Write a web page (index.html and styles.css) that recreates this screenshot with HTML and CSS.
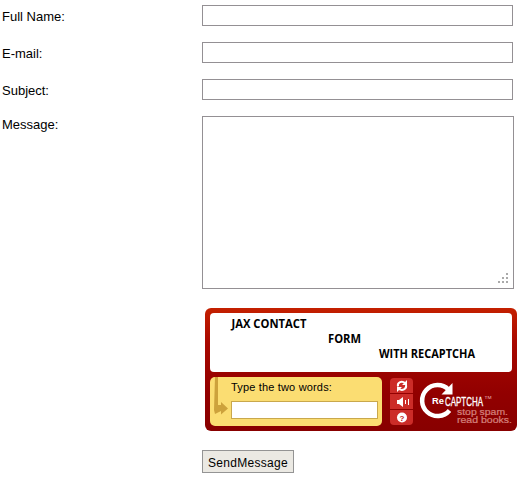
FILE: index.html
```html
<!DOCTYPE html>
<html lang="en">
<head>
<meta charset="utf-8">
<title>Contact form</title>
<link rel="stylesheet" href="styles.css">
</head>
<body>
<form class="contact">
  <label for="name">Full Name:</label><input id="name" class="field" type="text">
  <label for="email">E-mail:</label><input id="email" class="field" type="text">
  <label for="subject">Subject:</label><input id="subject" class="field" type="text">
  <label for="message" class="message-label">Message:</label>
  <div class="message-wrap">
    <textarea id="message" class="message"></textarea>
    <svg class="grip" width="10" height="10" fill="#aaa"><path d="M8 0h2v2h-2zM4 4h2v2h-2zM8 4h2v2h-2zM0 8h2v2h-2zM4 8h2v2h-2zM8 8h2v2h-2z"/></svg>
  </div>
  <div class="captcha">
    <svg class="challenge" width="302" height="59" viewBox="0 0 302 59">
      <text x="21.5" y="15" textLength="75" lengthAdjust="spacingAndGlyphs">JAX CONTACT</text>
      <text x="118" y="30" textLength="33" lengthAdjust="spacingAndGlyphs">FORM</text>
      <text x="169" y="45" textLength="96" lengthAdjust="spacingAndGlyphs">WITH RECAPTCHA</text>
    </svg>
    <div class="controls">
      <div class="answer">
        <svg class="arrow" width="18" height="40" viewBox="0 0 18 40"><path d="M4 0h3v28h3v-3l7 6.500-7 6V34l-6 3-1-4z" fill="#cda23c"/></svg>
        <label class="answer-label" for="words">Type the two words:</label>
        <input id="words" class="words" type="text">
      </div>
      <div class="tools">
        <button type="button" class="tool" aria-label="Reload"><svg width="23" height="16" viewBox="0 0 23 16"><path d="M8 8.500C7 4 12 2.500 15 5M16 7c1 4.500-4 6-7 4" fill="none" stroke="#fff" stroke-width="2"/><path d="M12 7h5V2zM12 9H7v5z" fill="#fff"/></svg></button>
        <button type="button" class="tool" aria-label="Audio"><svg width="23" height="16" viewBox="0 0 23 16"><path d="M7 6h2l4-3v10l-4-3H7z" fill="#fff"/><path d="M15.500 6v4M18.500 5v6" stroke="#fff"/></svg></button>
        <button type="button" class="tool" aria-label="Help"><svg width="23" height="16" viewBox="0 0 23 16"><circle cx="12" cy="7.500" r="5" fill="#fff"/><text x="12" y="10.500" class="question">?</text></svg></button>
      </div>
      <svg class="logo" width="99" height="49" viewBox="0 0 99 49">
        <path d="M31.500 12.500A15.500 15.500 0 1 0 32.500 33.500" fill="none" stroke="#fff" stroke-width="4.500"/>
        <path d="M35.500 6v11.500h-11z" fill="#fff"/>
        <text class="re" x="15" y="27" textLength="12" lengthAdjust="spacingAndGlyphs">Re</text>
        <text class="name" x="28" y="29" textLength="38" lengthAdjust="spacingAndGlyphs">CAPTCHA</text>
        <text class="tm" x="67.500" y="22" textLength="7" lengthAdjust="spacingAndGlyphs">TM</text>
        <text class="tag" x="40" y="38" textLength="51" lengthAdjust="spacingAndGlyphs">stop spam.</text>
        <text class="tag" x="40" y="46" textLength="55" lengthAdjust="spacingAndGlyphs">read books.</text>
      </svg>
    </div>
  </div>
  <button type="button" class="send">SendMessage</button>
</form>
</body>
</html>
```
FILE: styles.css
```css
* { box-sizing: border-box; }
body {
  margin: 0;
  background: #fff;
  color: #000;
  font: 13px/16px "Liberation Sans", Arial, sans-serif;
}
.contact {
  display: grid;
  grid-template-columns: 200px 315px;
  grid-template-rows: 21px 21px 21px 173px 126px 26px;
  row-gap: 16px;
  padding: 5px 0 5px 2px;
}
.contact > label { padding-top: 4px; }
.contact > .message-label { padding-top: 1px; }
input, textarea, button {
  margin: 0;
  border-radius: 0;
  font: inherit;
  outline: 0;
}
.field, .message {
  width: 311px;
  height: 21px;
  border: 1px solid #949094;
  background: #fff;
}
.message-wrap { position: relative; width: 312px; height: 173px; }
.message { display: block; width: 312px; height: 173px; resize: none; }
.grip { position: absolute; right: 6px; bottom: 6px; }
.captcha {
  grid-column: 2;
  width: 312px;
  height: 123px;
  margin: 3px 0 0 3px;
  padding: 5px;
  border-radius: 6px;
  background: linear-gradient(#c42000 0, #a80800 35px, #920000 85px, #880000);
}
.challenge {
  display: block;
  border-radius: 4px;
  background: #fff;
  font: bold 12px "Open Sans", sans-serif;
}
.controls { display: flex; margin-top: 5px; height: 49px; }
.answer {
  position: relative;
  flex: none;
  width: 172px;
  padding: 2px 0 0 21px;
  border-radius: 5px;
  background: #fbdd72;
}
.arrow { position: absolute; left: 1px; top: 0; }
.answer-label { display: block; font-size: 11px; line-height: 16px; letter-spacing: .17px; }
.words {
  display: block;
  width: 147px;
  height: 18px;
  margin-top: 6px;
  border: 1px solid #c9a84c;
  background: #fff;
}
.tools {
  display: flex;
  flex: none;
  flex-direction: column;
  gap: 1px;
  width: 23px;
  height: 47px;
  margin: 1px 0 0 8px;
  border-radius: 4px;
  overflow: hidden;
}
.tool { flex: 1; display: flex; min-height: 0; padding: 0; border: 0; background: #cc2c28; }
.question { font: bold 8px "Liberation Sans", sans-serif; fill: #c02020; text-anchor: middle; }
.logo { flex: none; margin-left: 4px; }
.re { font: bold 9px "Liberation Sans", sans-serif; fill: #fff; }
.name { font: 12px "Liberation Sans", sans-serif; fill: #fff; stroke: #fff; stroke-width: .3px; }
.tm { font: 4px "Liberation Sans", sans-serif; fill: #eebcbc; }
.tag { font: 8.5px "Liberation Sans", sans-serif; fill: #d4807c; stroke: #d4807c; stroke-width: .2px; }
.send {
  grid-column: 2;
  width: 92px;
  height: 23px;
  margin-top: 3px;
  padding: 3px 0 0;
  border: 1px solid #949494;
  background: #ebe9e3;
  color: #000;
  font-size: 12px;
  letter-spacing: .3px;
}
```
